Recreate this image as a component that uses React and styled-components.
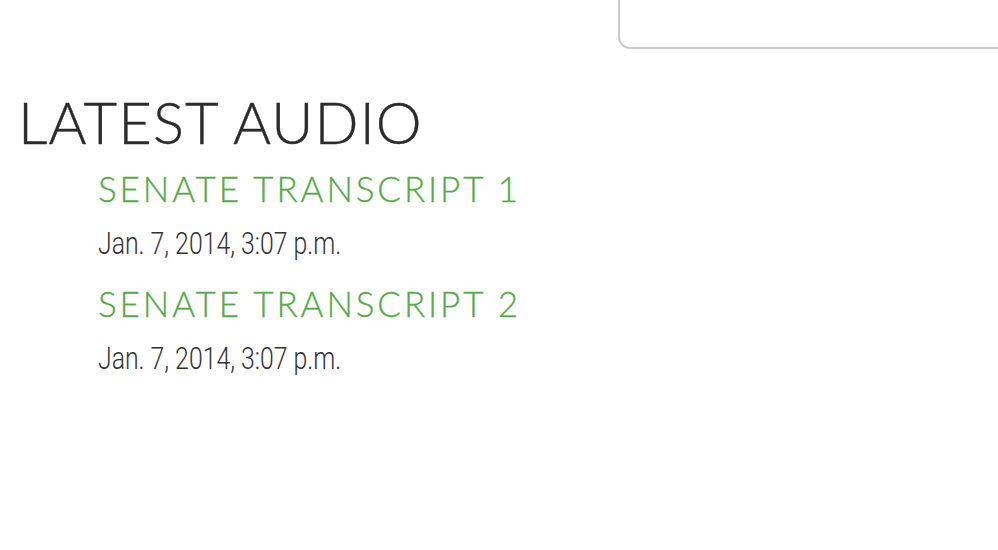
import React from "react";
import styled, { createGlobalStyle } from "styled-components";

const GlobalStyle = createGlobalStyle`
  html, body {
    margin: 0;
    padding: 0;
    background: #fff;
    overflow: hidden;
  }
`;

const Page = styled.div`
  width: 998px;
  height: 550px;
  position: relative;
  overflow: hidden;
`;

const TopBar = styled.div`
  display: flex;
  justify-content: flex-end;
  margin-top: -40px;
`;

const SearchBox = styled.div`
  width: 401px;
  height: 89px;
  margin-right: -21px;
  border: 2px solid #cccccc;
  border-radius: 12px;
  box-sizing: border-box;
`;

const Section = styled.section`
  padding: 41px 0 0 18px;
`;

const Title = styled.h1`
  margin: 0;
  font-family: Lato, "Open Sans", sans-serif;
  font-weight: 300;
  font-size: 58px;
  line-height: 64px;
  color: #2b2b2b;
  letter-spacing: 1.1px;
  -webkit-text-stroke: 0.4px #2b2b2b;
`;

const List = styled.ul`
  list-style: none;
  margin: 0;
  padding: 12px 0 0 80px;
`;

const Item = styled.li`
  margin-bottom: 9px;
`;

const ItemLink = styled.a`
  display: block;
  font-family: Lato, "Open Sans", sans-serif;
  font-weight: 300;
  font-size: 35px;
  line-height: 44px;
  letter-spacing: 2.9px;
  color: #54ab47;
  text-decoration: none;
  -webkit-text-stroke: 0.3px #54ab47;
`;

const ItemDate = styled.div`
  margin-top: 6px;
  font-family: Roboto, "DejaVu Sans Condensed", sans-serif;
  font-weight: 300;
  font-size: 31px;
  line-height: 56px;
  color: #333;
  white-space: nowrap;
  transform: scaleX(0.8);
  transform-origin: left center;
`;

const items = [
  { title: "SENATE TRANSCRIPT 1", date: "Jan. 7, 2014, 3:07 p.m." },
  { title: "SENATE TRANSCRIPT 2", date: "Jan. 7, 2014, 3:07 p.m." },
];

export default function App() {
  return (
    <Page>
      <GlobalStyle />
      <TopBar>
        <SearchBox />
      </TopBar>
      <Section>
        <Title>LATEST AUDIO</Title>
        <List>
          {items.map((item, i) => (
            <Item key={i}>
              <ItemLink href="#">{item.title}</ItemLink>
              <ItemDate>{item.date}</ItemDate>
            </Item>
          ))}
        </List>
      </Section>
    </Page>
  );
}
